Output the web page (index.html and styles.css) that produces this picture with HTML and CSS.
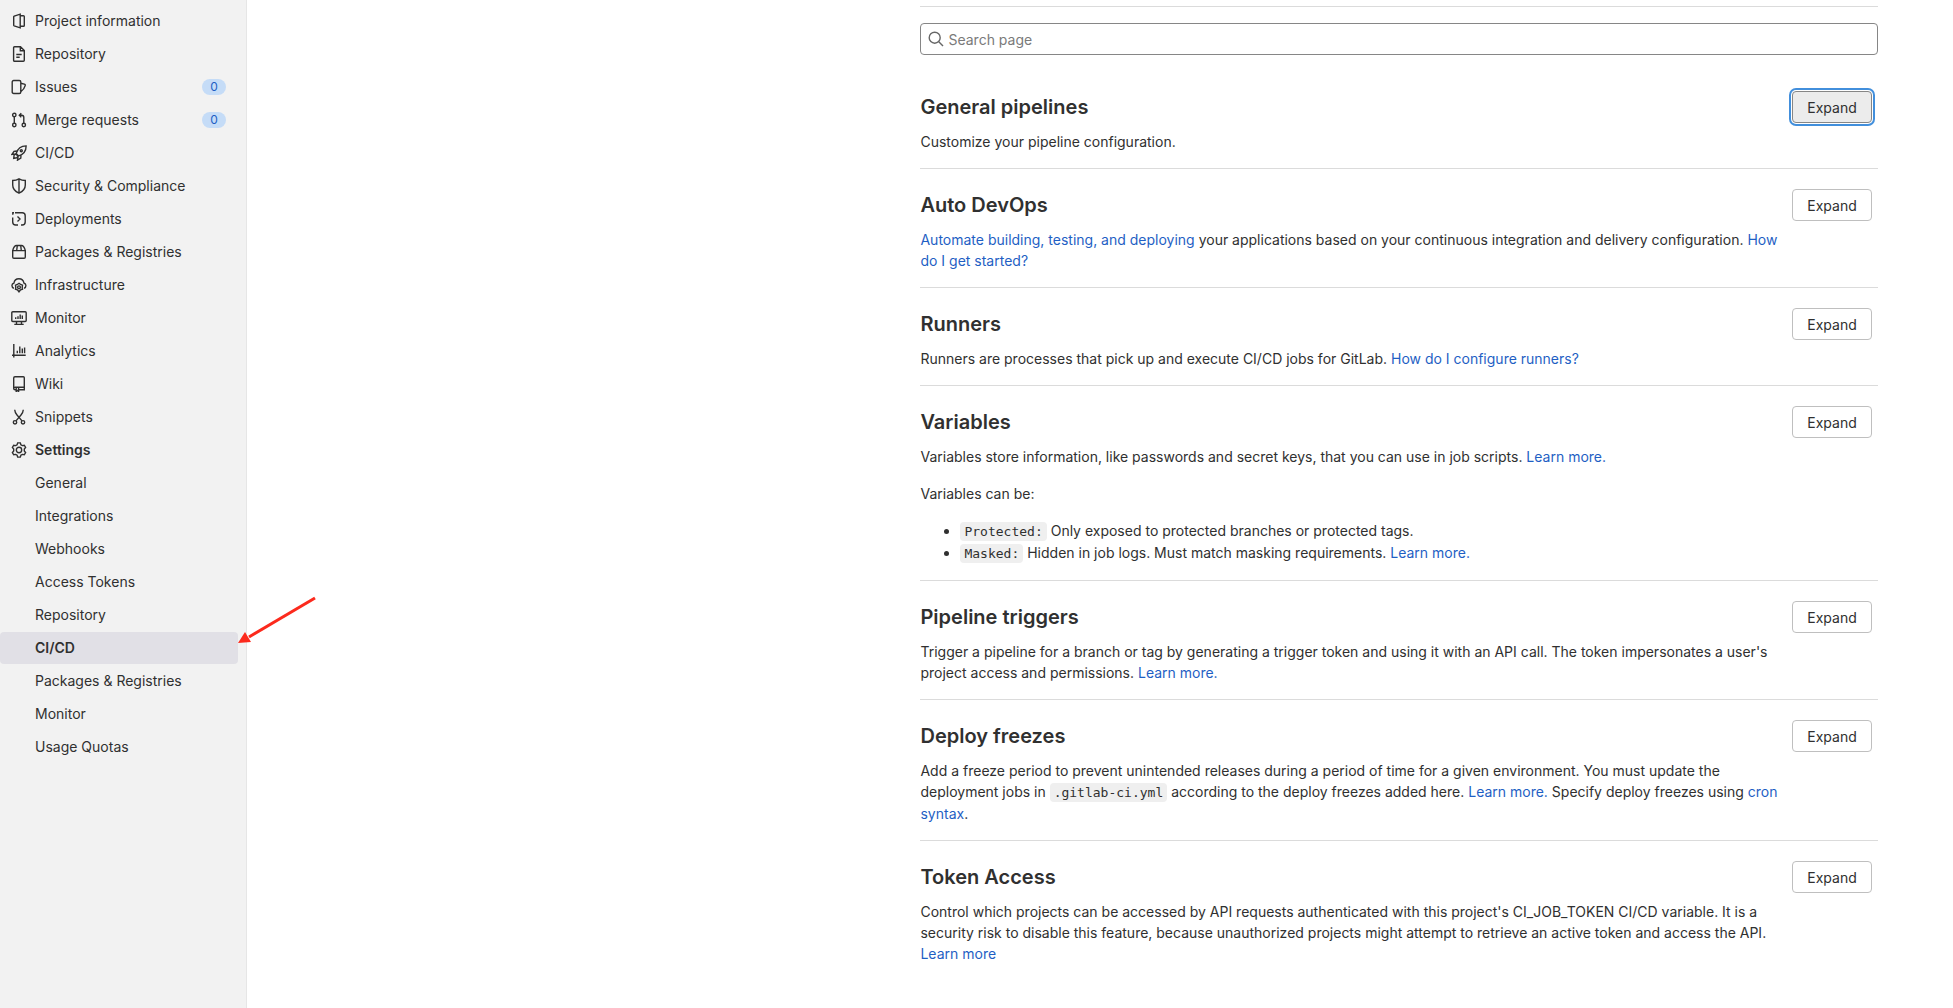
FILE: index.html
```html
<!DOCTYPE html>
<html lang="en">
<head>
<meta charset="utf-8">
<title>CI/CD Settings</title>
<link rel="stylesheet" href="styles.css">
</head>
<body>
<div class="layout">
  <nav class="sidebar" aria-label="Project navigation">
    <ul class="menu">
      <li><a class="item" href="#"><svg class="icon" viewBox="0 0 16 16"><path d="M9.2 1.2v13.6L3.2 12.9a.8.8 0 0 1-.5-.7V3.8c0-.3.2-.6.5-.7zM9.2 2.7h3.2c.5 0 .9.4.9.9v8.8c0 .5-.4.9-.9.9H9.2"/></svg>Project information</a></li>
      <li><a class="item" href="#"><svg class="icon" viewBox="0 0 16 16"><path d="M3.5.8h6l3.8 3.7v9.700c0 .6-.4 1-1 1H3.500c-.5 0-.9-.4-.9-1V1.800c0-.6.4-1 .9-1zM9.300 1v3.700h3.900M5.300 8.500h5.400M5.300 11.300h3.400"/></svg>Repository</a></li>
      <li><a class="item" href="#"><svg class="icon" viewBox="0 0 16 16"><path d="M2.700 1.500h5.600c.9 0 1.500.6 1.500 1.500v10c0 .9-.6 1.500-1.500 1.500H2.700c-.9 0-1.500-.6-1.500-1.500V3c0-.9.600-1.500 1.500-1.500zM9.800 4.200l3.500.9c.8.2 1.100.8.900 1.600-.6 2.300-1.900 4.300-4.400 6"/></svg>Issues<span class="badge">0</span></a></li>
      <li><a class="item" href="#"><svg class="icon" viewBox="0 0 16 16"><circle cx="3.300" cy="3" r="1.700"/><circle cx="3.300" cy="13" r="1.700"/><circle cx="12.800" cy="13" r="1.700"/><path d="M3.300 4.700v6.600M12.800 11.300V5.500c0-1.300-.8-2.300-2-2.300H8.500M10.300 1.200l-2 2 2 2"/></svg>Merge requests<span class="badge">0</span></a></li>
      <li><a class="item" href="#"><svg class="icon" viewBox="0 0 16 16"><path d="M5.200 8.400C6.500 4.200 9.500 1 15.100.9c.1 5.300-3.100 8.500-7.400 10zM5.600 6L3 6.300.9 9.500l4.100-.6M10 10.200l-.2 2.800-3.300 2.100.7-4.100M4.600 9l-1.500 1.200-.4 3.100 3-.5 1.500-1.700z"/><circle cx="10.300" cy="5.700" r="1"/></svg>CI/CD</a></li>
      <li><a class="item" href="#"><svg class="icon" viewBox="0 0 16 16"><path d="M8 .9c1.900 1.100 3.900 1.600 6.300 1.600v4.600c0 3.700-2.500 6.500-6.300 8.100-3.800-1.600-6.300-4.400-6.300-8.100V2.500C4.100 2.500 6.100 2 8 .9zM8 1v14"/></svg>Security &amp; Compliance</a></li>
      <li><a class="item" href="#"><svg class="icon" viewBox="0 0 16 16"><path d="M4 1.700h7.200c1.800 0 3 1.200 3 3V11c0 1.800-1.200 3-3 3H10M3 1.700H1.800v2M1.700 6.500v4.500c0 1.800 1.200 3 3 3H7M6.500 5.500L9 8l-2.500 2.500"/></svg>Deployments</a></li>
      <li><a class="item" href="#"><svg class="icon" viewBox="0 0 16 16"><path d="M1.700 6.600v6.500c0 .7.500 1.200 1.200 1.200h10.200c.7 0 1.200-.5 1.200-1.200V6.600zM1.700 6.600C2.400 3.700 4 1.500 5.500 1.500h5c1.500 0 3.100 2.200 3.800 5.100M6.300 1.500l-.6 5M9.700 1.500l.6 5"/></svg>Packages &amp; Registries</a></li>
      <li><a class="item" href="#"><svg class="icon" viewBox="0 0 16 16"><path d="M2.900 11.400C.3 10.300.2 6.700 3 6c.3-2.400 2.200-4.200 4.900-4.200s4.600 1.800 5 4.200c2.700.7 2.600 4.300.2 5.400M8 6.300l1.600 1.200 1.900.7-.3 2 .3 2-1.900.7L8 14.800l-1.600-1.900-1.900-.7.3-2-.3-2 1.900-.7z"/><circle cx="8" cy="10.300" r="1.400"/></svg>Infrastructure</a></li>
      <li><a class="item" href="#"><svg class="icon" viewBox="0 0 16 16"><path d="M1.800 1.700h12.400c.6 0 1 .4 1 1v7.800c0 .6-.4 1-1 1H1.800c-.6 0-1-.4-1-1V2.700c0-.6.4-1 1-1zM5.500 11.500v2.800M10.500 11.500v2.800M3.300 14.400h9.400M4.700 7.300v1.800M7 6.300v2.800M9.200 4.500v4.600M11.300 5.500v3.600"/></svg>Monitor</a></li>
      <li><a class="item" href="#"><svg class="icon" viewBox="0 0 16 16"><path d="M2.800 1v13.500M1 12.300h13.700M6.300 7.700v2.500M8.800 3.500v6.700M11.300 5.500v4.700M13.600 4.500v5.700"/></svg>Analytics</a></li>
      <li><a class="item" href="#"><svg class="icon" viewBox="0 0 16 16"><path d="M4 .8h8.300c.6 0 1 .4 1 1v9.500H4.200c-.9 0-1.500.5-1.500 1.300V2.100C2.700 1.300 3.200.8 4 .8zM2.700 12.500c0 .8.600 1.300 1.400 1.300h.7M13.300 11.300v2.500H8M5.200 12v3.500l1.200-1 1.200 1V12"/></svg>Wiki</a></li>
      <li><a class="item" href="#"><svg class="icon" viewBox="0 0 16 16"><circle cx="4" cy="13.300" r="1.700"/><circle cx="12" cy="13.300" r="1.700"/><path d="M3.700.7c.2 2.500 1 3.800 2.300 5.300l5 5.900M12.300.7C12.100 3.200 11.300 4.500 10 6l-5 5.900"/></svg>Snippets</a></li>
      <li><a class="item item-open" href="#"><svg class="icon" viewBox="0 0 16 16"><path d="M6.700.9h2.600l.6 1.900 1.400.8 2-.4 1.300 2.200L13.300 7v2l1.300 1.600-1.300 2.200-2-.4-1.400.8-.6 1.900H6.700l-.6-1.900-1.400-.8-2 .4-1.300-2.200L2.700 9V7L1.400 5.400l1.300-2.200 2 .4 1.400-.8z"/><circle cx="8" cy="8" r="2.700"/></svg>Settings</a>
        <ul class="submenu">
          <li><a class="item" href="#">General</a></li>
          <li><a class="item" href="#">Integrations</a></li>
          <li><a class="item" href="#">Webhooks</a></li>
          <li><a class="item" href="#">Access Tokens</a></li>
          <li><a class="item" href="#">Repository</a></li>
          <li class="current"><a class="item item-active" href="#" aria-current="page">CI/CD</a>
            <svg class="pointer" viewBox="0 0 80 50"><path d="M77 3L11 42" stroke="#fc2a1d" stroke-width="3" fill="none"/><path d="M0 48L7 37L13 47Z" fill="#fc2a1d" stroke="none"/></svg>
          </li>
          <li><a class="item" href="#">Packages &amp; Registries</a></li>
          <li><a class="item" href="#">Monitor</a></li>
          <li><a class="item" href="#">Usage Quotas</a></li>
        </ul>
      </li>
    </ul>
  </nav>

  <main class="main">
    <div class="content">
      <div class="search">
        <svg class="icon search-icon" viewBox="0 0 16 16"><circle cx="6.700" cy="6.700" r="5.500"/><path d="M10.800 10.800l4.200 4.200"/></svg>
        <input class="search-input" type="search" placeholder="Search page" aria-label="Search page">
      </div>

      <section class="section">
        <div class="text">
          <h2>General pipelines</h2>
          <p>Customize your pipeline configuration.</p>
        </div>
        <button class="btn btn-focus" type="button">Expand</button>
      </section>

      <section class="section">
        <div class="text">
          <h2>Auto DevOps</h2>
          <p><a href="#">Automate building, testing, and deploying</a> your applications based on your continuous integration and delivery configuration. <a href="#">How do I get started?</a></p>
        </div>
        <button class="btn" type="button">Expand</button>
      </section>

      <section class="section">
        <div class="text">
          <h2>Runners</h2>
          <p>Runners are processes that pick up and execute CI/CD jobs for GitLab. <a href="#">How do I configure runners?</a></p>
        </div>
        <button class="btn" type="button">Expand</button>
      </section>

      <section class="section">
        <div class="text">
          <h2>Variables</h2>
          <p>Variables store information, like passwords and secret keys, that you can use in job scripts. <a href="#">Learn more.</a></p>
          <p>Variables can be:</p>
          <ul class="bullets">
            <li><code>Protected:</code> Only exposed to protected branches or protected tags.</li>
            <li><code>Masked:</code> Hidden in job logs. Must match masking requirements. <a href="#">Learn more.</a></li>
          </ul>
        </div>
        <button class="btn" type="button">Expand</button>
      </section>

      <section class="section">
        <div class="text">
          <h2>Pipeline triggers</h2>
          <p>Trigger a pipeline for a branch or tag by generating a trigger token and using it with an API call. The token impersonates a user's project access and permissions. <a href="#">Learn more.</a></p>
        </div>
        <button class="btn" type="button">Expand</button>
      </section>

      <section class="section">
        <div class="text">
          <h2>Deploy freezes</h2>
          <p>Add a freeze period to prevent unintended releases during a period of time for a given environment. You must update the deployment jobs in <code>.gitlab-ci.yml</code> according to the deploy freezes added here. <a href="#">Learn more.</a> Specify deploy freezes using <a href="#">cron syntax</a>.</p>
        </div>
        <button class="btn" type="button">Expand</button>
      </section>

      <section class="section">
        <div class="text">
          <h2>Token Access</h2>
          <p>Control which projects can be accessed by API requests authenticated with this project's CI_JOB_TOKEN CI/CD variable. It is a security risk to disable this feature, because unauthorized projects might attempt to retrieve an active token and access the API. <a href="#">Learn more</a></p>
        </div>
        <button class="btn" type="button">Expand</button>
      </section>
    </div>
  </main>
</div>
</body>
</html>
```

FILE: styles.css
```css
* {
  box-sizing: border-box;
}

body {
  margin: 0;
  background: #fff;
  color: #303030;
  font-family: Inter, "Liberation Sans", sans-serif;
  font-size: 14px;
  line-height: 21px;
}

a {
  color: #1f5fc4;
  text-decoration: none;
}

.layout {
  display: grid;
  grid-template-columns: 247px 1fr;
  min-height: 100vh;
}

/* Sidebar */

.sidebar {
  padding: 5px 8px 0 0;
  background: #f2f2f2;
  border-right: 1px solid #e6e6e6;
}

.menu,
.submenu {
  display: flex;
  flex-direction: column;
  gap: 1px;
  margin: 0;
  padding: 0;
  list-style: none;
}

.submenu {
  margin-top: 1px;
}

.item {
  display: flex;
  align-items: center;
  gap: 8px;
  height: 32px;
  padding: 0 12px 1px 11px;
  color: #303030;
}

.submenu .item {
  padding-left: 35px;
}

.item-open,
.item-active {
  font-weight: 600;
}

.item-active {
  background: #e1e0e6;
  border-radius: 4px;
}

.badge {
  min-width: 24px;
  margin-left: auto;
  border-radius: 8px;
  background: #c5dcf7;
  color: #1f5fc4;
  font-size: 12px;
  line-height: 16px;
  text-align: center;
}

.icon {
  flex: none;
  width: 16px;
  height: 16px;
  fill: none;
  stroke: #303030;
  stroke-width: 1.4;
}

.current {
  position: relative;
}

.pointer {
  position: absolute;
  left: 100%;
  bottom: 19px;
  width: 80px;
  height: 50px;
}

/* Settings sections */

.main {
  display: grid;
  grid-template-columns: 5fr 8fr;
  padding: 6px 75px 0;
}

.content {
  grid-column: 2;
  border-top: 1px solid #dbdbdb;
}

.search {
  position: relative;
  margin: 16px 0;
}

.search-icon {
  position: absolute;
  top: 8px;
  left: 8px;
  stroke: #666;
}

.search-input {
  display: block;
  width: 100%;
  height: 32px;
  padding: 0 12px 0 27px;
  border: 1px solid #868686;
  border-radius: 4px;
  background: #fff;
  color: #303030;
  font: inherit;
}

.search-input::placeholder {
  color: #7a7a7a;
  opacity: 1;
}

.section {
  display: flex;
  align-items: flex-start;
  gap: 10px;
  padding: 20px 6px 0 0;
}

.section + .section {
  border-top: 1px solid #dbdbdb;
}

.text {
  flex: 1;
}

h2 {
  margin: 4px 0 12px;
  font-size: 20px;
  font-weight: 600;
  line-height: 24px;
}

p {
  margin: 0 0 16px;
}

.bullets {
  margin: 0 0 16px;
  padding-left: 40px;
}

code {
  padding: 2px 4px;
  border-radius: 4px;
  background: #efefef;
  font-family: "DejaVu Sans Mono", monospace;
  font-size: 13px;
}

.btn {
  flex: none;
  width: 80px;
  height: 32px;
  padding: 0;
  border: 1px solid #bfbfbf;
  border-radius: 4px;
  background: #fff;
  color: #303030;
  font: inherit;
}

.btn-focus {
  border-color: #868686;
  background: #ececec;
  box-shadow: 0 0 0 1px #fff, 0 0 0 3px #428fdc;
}
```
